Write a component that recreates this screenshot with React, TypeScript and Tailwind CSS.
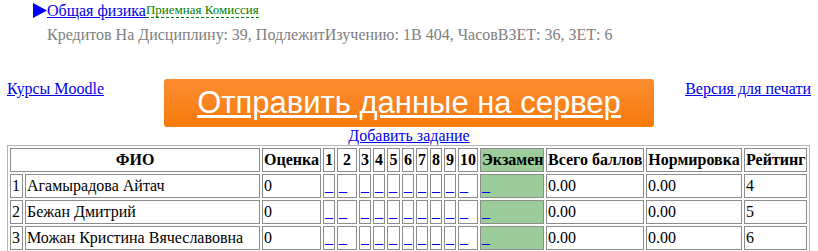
const students = [
  { n: 1, name: 'Агамырадова Айтач', rating: '4' },
  { n: 2, name: 'Бежан Дмитрий', rating: '5' },
  { n: 3, name: 'Можан Кристина Вячеславовна', rating: '6' },
];

const tasks = ['1', '2', '3', '4', '5', '6', '7', '8', '9', '10'];

const cell = 'border border-[#8c8c8c] p-[1px] h-[24px] align-middle overflow-hidden whitespace-nowrap';

export default function App() {
  return (
    <div className="w-[818px] h-[251px] overflow-hidden bg-white text-black text-[16px] leading-[18px] font-['Liberation_Serif',serif]">
      {/* Header */}
      <div className="pl-[33px] pt-[2px]">
        <div className="flex items-start">
          <svg width="14" height="15" viewBox="0 0 14 15" className="mt-[1px] shrink-0">
            <polygon points="0,0 14,7.5 0,15" fill="#0000ff" />
          </svg>
          <a href="#" className="text-[#0000ee] underline">Общая физика</a>
          <span className="text-[13px] leading-[14px] text-[#008000] border-b border-dashed border-[#008000] mt-[1px]">
            Приемная Комиссия
          </span>
        </div>
        <div className="pl-[14px] mt-[6px] text-[#808080]">
          Кредитов На Дисциплину: 39, ПодлежитИзучению: 1В 404, ЧасовВЗЕТ: 36, ЗЕТ: 6
        </div>
      </div>

      {/* Actions */}
      <div className="mt-[35px] grid grid-cols-[1fr_490px_1fr] items-start px-[7px]">
        <a href="#" className="text-[#0000ee] underline mt-[1px]">Курсы Moodle</a>
        <a
          href="#"
          className="h-[48px] rounded-[3px] bg-gradient-to-b from-[#fb8d2f] to-[#f77a04] text-white underline flex items-center justify-center text-[31px] leading-[36px] font-['Liberation_Sans',sans-serif]"
        >
          Отправить данные на сервер
        </a>
        <a href="#" className="text-[#0000ee] underline mt-[1px] justify-self-end">Версия для печати</a>
      </div>
      <div className="text-center">
        <a href="#" className="text-[#0000ee] underline">Добавить задание</a>
      </div>

      {/* Table */}
      <div className="pl-[7px]">
        <table className="table-fixed w-[803px] border border-[#b4b4b4] border-separate border-spacing-[2px]">
          <colgroup>
            <col className="w-[13px]" />
            <col className="w-[235px]" />
            <col className="w-[59px]" />
            <col className="w-[12px]" />
            <col className="w-[20px]" />
            <col className="w-[12px]" />
            <col className="w-[12px]" />
            <col className="w-[13px]" />
            <col className="w-[12px]" />
            <col className="w-[12px]" />
            <col className="w-[12px]" />
            <col className="w-[12px]" />
            <col className="w-[20px]" />
            <col className="w-[64px]" />
            <col className="w-[98px]" />
            <col className="w-[96px]" />
            <col className="w-[63px]" />
          </colgroup>
          <thead>
            <tr>
              <th colSpan={2} className={cell}>ФИО</th>
              <th className={cell}>Оценка</th>
              {tasks.map((t) => (
                <th key={t} className={cell}>{t}</th>
              ))}
              <th className={`${cell} bg-[#9ccc99]`}>Экзамен</th>
              <th className={cell}>Всего баллов</th>
              <th className={cell}>Нормировка</th>
              <th className={cell}>Рейтинг</th>
            </tr>
          </thead>
          <tbody>
            {students.map((s) => (
              <tr key={s.n}>
                <td className={cell}>{s.n}</td>
                <td className={`${cell} text-left`}>{s.name}</td>
                <td className={cell}>0</td>
                {tasks.map((t) => (
                  <td key={t} className={cell}>
                    <a href="#" className="text-[#0000ee] underline">_</a>
                  </td>
                ))}
                <td className={`${cell} bg-[#9ccc99]`}>
                  <a href="#" className="text-[#0000ee] underline">_</a>
                </td>
                <td className={cell}>0.00</td>
                <td className={cell}>0.00</td>
                <td className={cell}>{s.rating}</td>
              </tr>
            ))}
          </tbody>
        </table>
      </div>
    </div>
  );
}
